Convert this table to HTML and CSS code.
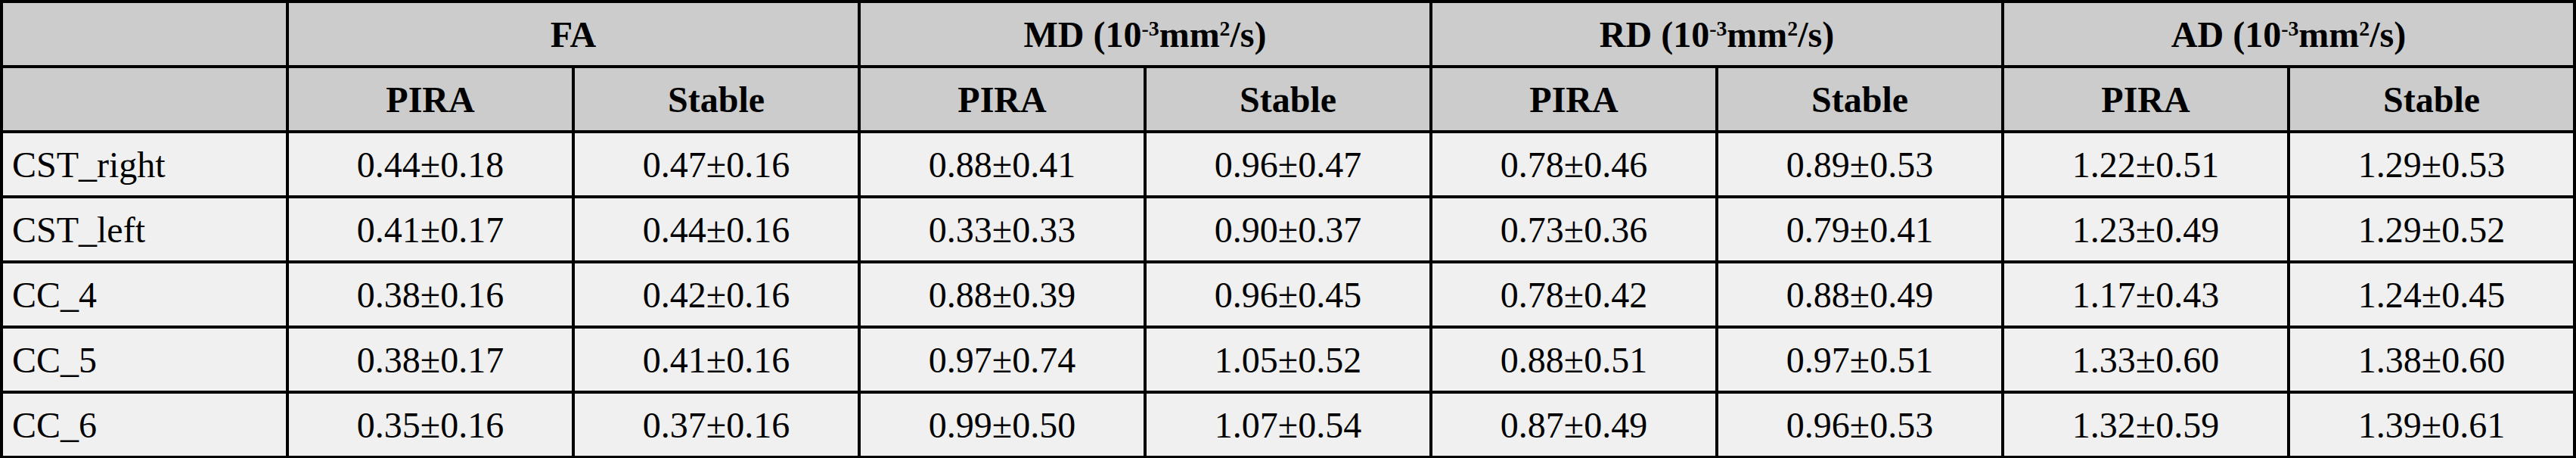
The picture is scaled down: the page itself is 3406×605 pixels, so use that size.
FILE: index.html
```html
<!DOCTYPE html>
<html>
<head>
  <title>DTI metrics</title>
  <link rel="stylesheet" href="styles.css">
</head>
<body>
  <table class="metrics">
    <colgroup>
      <col class="col-name">
      <col span="8" class="col-value">
    </colgroup>
    <thead>
      <tr>
        <th></th>
        <th colspan="2">FA</th>
        <th colspan="2">MD (10<sup>-3</sup>mm<sup>2</sup>/s)</th>
        <th colspan="2">RD (10<sup>-3</sup>mm<sup>2</sup>/s)</th>
        <th colspan="2">AD (10<sup>-3</sup>mm<sup>2</sup>/s)</th>
      </tr>
      <tr>
        <th></th>
        <th>PIRA</th>
        <th>Stable</th>
        <th>PIRA</th>
        <th>Stable</th>
        <th>PIRA</th>
        <th>Stable</th>
        <th>PIRA</th>
        <th>Stable</th>
      </tr>
    </thead>
    <tbody>
      <tr>
        <td class="name">CST_right</td>
        <td>0.44±0.18</td><td>0.47±0.16</td>
        <td>0.88±0.41</td><td>0.96±0.47</td>
        <td>0.78±0.46</td><td>0.89±0.53</td>
        <td>1.22±0.51</td><td>1.29±0.53</td>
      </tr>
      <tr>
        <td class="name">CST_left</td>
        <td>0.41±0.17</td><td>0.44±0.16</td>
        <td>0.33±0.33</td><td>0.90±0.37</td>
        <td>0.73±0.36</td><td>0.79±0.41</td>
        <td>1.23±0.49</td><td>1.29±0.52</td>
      </tr>
      <tr>
        <td class="name">CC_4</td>
        <td>0.38±0.16</td><td>0.42±0.16</td>
        <td>0.88±0.39</td><td>0.96±0.45</td>
        <td>0.78±0.42</td><td>0.88±0.49</td>
        <td>1.17±0.43</td><td>1.24±0.45</td>
      </tr>
      <tr>
        <td class="name">CC_5</td>
        <td>0.38±0.17</td><td>0.41±0.16</td>
        <td>0.97±0.74</td><td>1.05±0.52</td>
        <td>0.88±0.51</td><td>0.97±0.51</td>
        <td>1.33±0.60</td><td>1.38±0.60</td>
      </tr>
      <tr>
        <td class="name">CC_6</td>
        <td>0.35±0.16</td><td>0.37±0.16</td>
        <td>0.99±0.50</td><td>1.07±0.54</td>
        <td>0.87±0.49</td><td>0.96±0.53</td>
        <td>1.32±0.59</td><td>1.39±0.61</td>
      </tr>
    </tbody>
  </table>
</body>
</html>
```
FILE: styles.css
```css
* {
  box-sizing: border-box;
  margin: 0;
  padding: 0;
}

body {
  font-family: "Liberation Serif", "Times New Roman", serif;
  background-color: #ffffff;
  color: #000;
}

.metrics {
  border-collapse: collapse;
  table-layout: fixed;
  width: 3404px;
  font-size: 48px;
}

.col-name {
  width: 378px;
}

.col-value {
  width: 378px;
}

.metrics th,
.metrics td {
  border: 4px solid #000;
  height: 86px;
  padding: 0 12px;
  text-align: center;
  vertical-align: middle;
  white-space: nowrap;
}

.metrics th {
  background-color: #cccccc;
  font-weight: bold;
}

.metrics td {
  background-color: #f0f0f0;
  font-weight: normal;
}

.metrics td.name {
  text-align: left;
}

.metrics sup {
  font-size: 0.58em;
  line-height: 0;
  vertical-align: 0.55em;
}
```
